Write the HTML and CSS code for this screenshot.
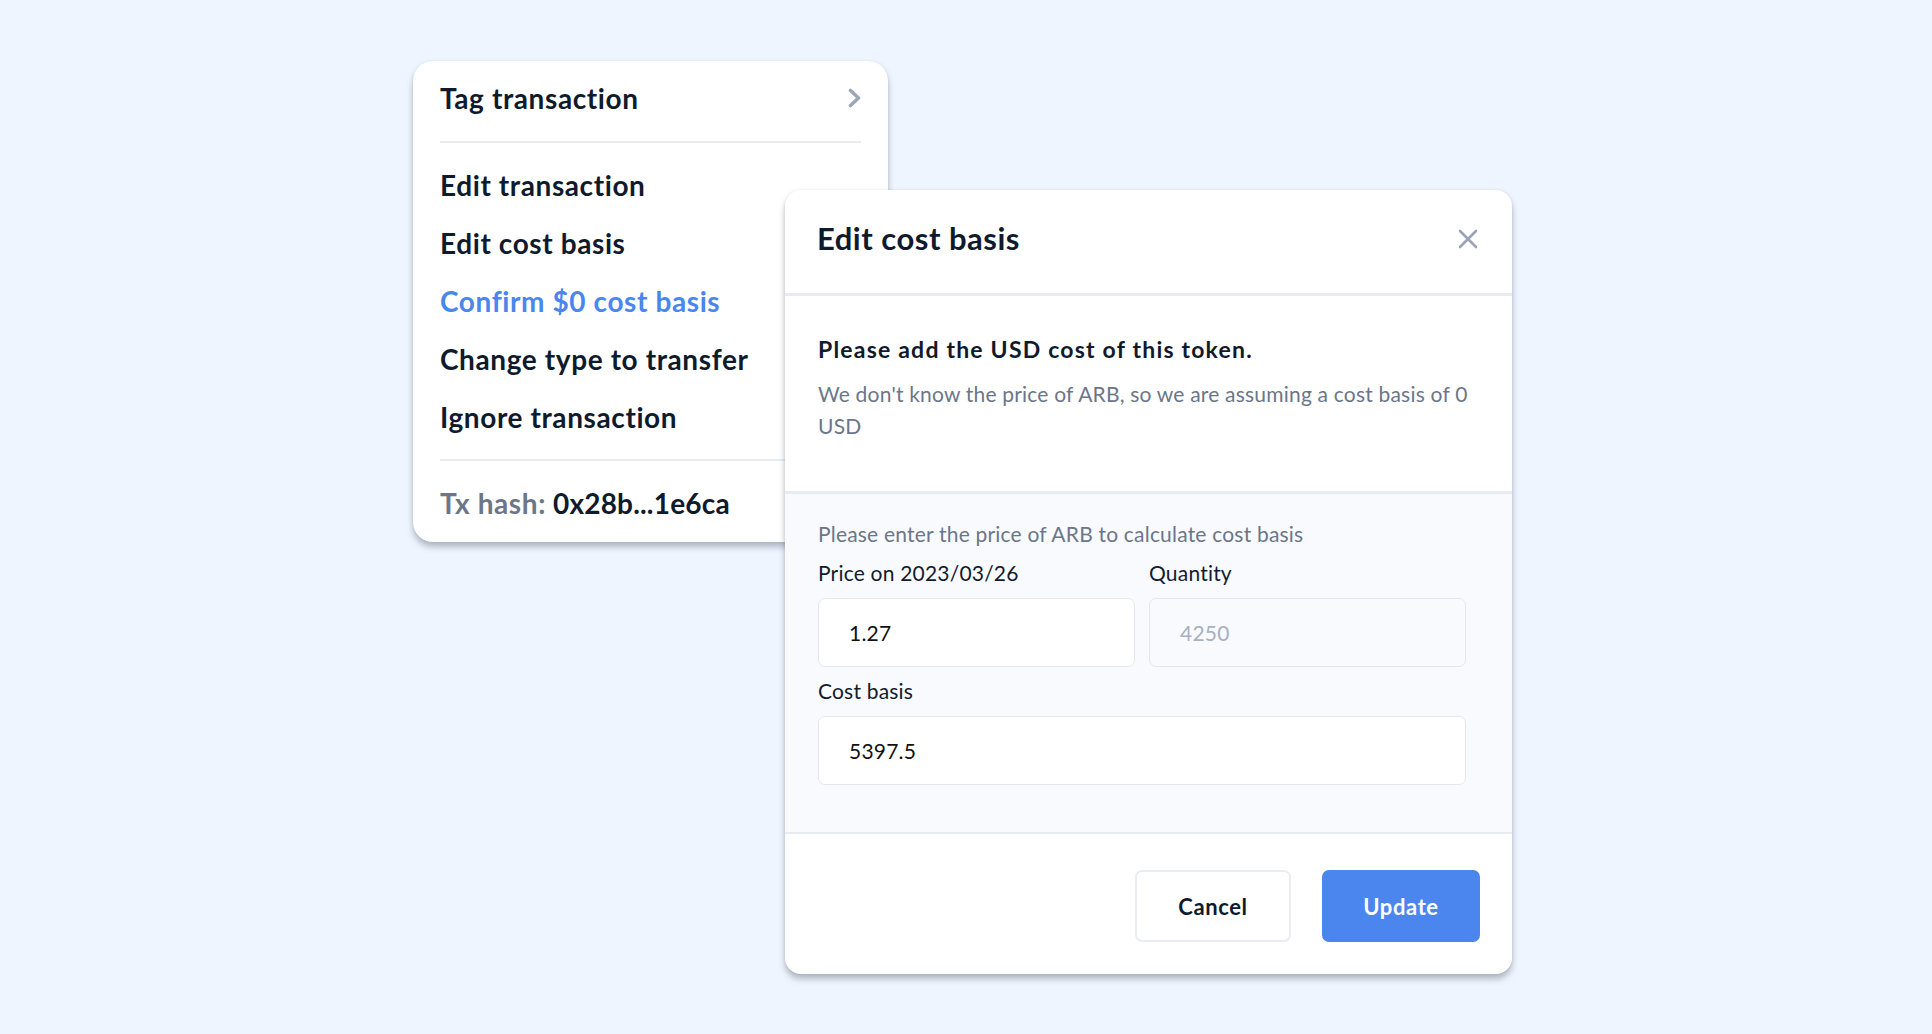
FILE: index.html
```html
<!DOCTYPE html>
<html lang="en">
<head>
<meta charset="utf-8">
<title>Edit cost basis</title>
<link rel="stylesheet" href="styles.css">
</head>
<body>
<div class="stage">
  <div class="menu">
    <div class="menu-head">
      <span class="menu-title">Tag transaction</span>
      <svg class="chev" width="16" height="20" viewBox="0 0 16 20"><path d="M3.5 2.5 L11.5 10 L3.5 17.5" fill="none" stroke="#9ca6b6" stroke-width="3.6" stroke-linecap="round" stroke-linejoin="round"/></svg>
    </div>
    <ul class="menu-list">
      <li class="menu-item">Edit transaction</li>
      <li class="menu-item">Edit cost basis</li>
      <li class="menu-item menu-item-blue">Confirm $0 cost basis</li>
      <li class="menu-item">Change type to transfer</li>
      <li class="menu-item">Ignore transaction</li>
    </ul>
    <div class="menu-foot"><span class="hash-label">Tx hash:</span><span class="hash-val">0x28b...1e6ca</span></div>
  </div>

  <div class="modal">
    <div class="modal-head">
      <h2 class="modal-title">Edit cost basis</h2>
      <svg class="close" width="20" height="20" viewBox="0 0 20 20"><path d="M2 2 L18 18 M18 2 L2 18" fill="none" stroke="#9aa4b6" stroke-width="2.6" stroke-linecap="round"/></svg>
    </div>
    <div class="modal-info">
      <h3 class="info-title">Please add the USD cost of this token.</h3>
      <p class="info-text">We don't know the price of ARB, so we are assuming a cost basis of 0 USD</p>
    </div>
    <div class="modal-form">
      <p class="form-hint">Please enter the price of ARB to calculate cost basis</p>
      <div class="row">
        <div class="field">
          <label class="label">Price on 2023/03/26</label>
          <div class="input">1.27</div>
        </div>
        <div class="field">
          <label class="label">Quantity</label>
          <div class="input input-disabled">4250</div>
        </div>
      </div>
      <div class="field">
        <label class="label">Cost basis</label>
        <div class="input">5397.5</div>
      </div>
    </div>
    <div class="modal-foot">
      <button class="btn btn-cancel">Cancel</button>
      <button class="btn btn-update">Update</button>
    </div>
  </div>
</div>
</body>
</html>
```

FILE: styles.css
```css
* { box-sizing: border-box; }
html, body { margin: 0; padding: 0; }
body {
  background: #eff5fe;
  font-family: "Lato", "Liberation Sans", sans-serif;
  color: #0f1a2d;
}
.stage {
  position: relative;
  width: 1932px;
  height: 1034px;
  overflow: hidden;
}

/* context menu */
.menu {
  position: absolute;
  left: 413px;
  top: 61px;
  width: 475px;
  height: 481px;
  background: #fff;
  border-radius: 20px;
  box-shadow: 0 5px 6px rgba(60, 70, 85, 0.35), 0 0 3px rgba(60, 70, 85, 0.08);
  padding: 0 27px;
}
.menu-head {
  height: 82px;
  padding-bottom: 6px;
  display: flex;
  align-items: center;
  justify-content: space-between;
  border-bottom: 2px solid #e8ecf1;
}
.menu-title, .menu-item {
  font-size: 28px;
  font-weight: 700;
  letter-spacing: 0.6px;
  line-height: 58px;
  white-space: nowrap;
}
.menu-title { line-height: 40px; }
.chev { margin-right: -2px; }
.menu-list {
  list-style: none;
  margin: 0;
  padding: 13px 0 13px;
  border-bottom: 2px solid #e8ecf1;
}
.menu-item-blue { color: #4a86ee; }
.menu-foot {
  height: 79px;
  padding-top: 4px;
  display: flex;
  align-items: center;
  font-size: 28px;
  font-weight: 700;
  white-space: nowrap;
}
.hash-label { color: #6b7689; letter-spacing: 0.6px; margin-right: 7px; }
.hash-val { letter-spacing: 0.2px; }

/* modal */
.modal {
  position: absolute;
  left: 785px;
  top: 190px;
  width: 727px;
  height: 784px;
  background: #fff;
  border-radius: 16px;
  box-shadow: 0 5px 6px rgba(60, 70, 85, 0.35), 0 0 3px rgba(60, 70, 85, 0.1);
  display: flex;
  flex-direction: column;
  overflow: hidden;
}
.modal-head {
  height: 103px;
  padding: 0 34px 8px 32px;
  display: flex;
  align-items: center;
  justify-content: space-between;
}
.modal-title {
  margin: 0;
  font-size: 31px;
  font-weight: 700;
  letter-spacing: 0.5px;
  line-height: 40px;
}
.close { margin-top: 2px; }
.modal-info {
  border-top: 3px solid #e8ecf1;
  padding: 38px 33px 50px;
  height: 198px;
}
.info-title {
  margin: 0;
  font-size: 23px;
  font-weight: 700;
  letter-spacing: 1.2px;
  line-height: 30px;
}
.info-text {
  margin: 14px 0 0;
  font-size: 21px;
  line-height: 31.5px;
  color: #6b7689;
  letter-spacing: 0.2px;
}
.modal-form {
  border-top: 3px solid #e8ecf1;
  background: #f8fafd;
  padding: 26px 46px 0 33px;
  height: 341px;
}
.form-hint {
  margin: 0 0 11px;
  font-size: 21px;
  line-height: 28px;
  color: #6b7689;
  letter-spacing: 0.2px;
}
.row {
  display: flex;
  gap: 14px;
  margin-bottom: 10px;
}
.row .field { flex: 1; }
.label {
  display: block;
  font-size: 21px;
  line-height: 28px;
  color: #121c2e;
  letter-spacing: 0.2px;
  margin-bottom: 11px;
}
.input {
  height: 69px;
  border: 1px solid #e4e8ee;
  border-radius: 7px;
  background: #fff;
  padding: 0 30px;
  display: flex;
  align-items: center;
  font-size: 21px;
  color: #111;
  letter-spacing: 0.2px;
}
.input-disabled {
  background: #f8fafd;
  color: #a7b0c0;
}
.modal-foot {
  border-top: 2px solid #e8ecf1;
  flex: 1;
  display: flex;
  justify-content: flex-end;
  align-items: flex-start;
  gap: 31px;
  padding: 36px 32px 0 0;
}
.btn {
  height: 72px;
  border-radius: 7px;
  font-family: inherit;
  font-size: 22px;
  font-weight: 700;
  letter-spacing: 0.6px;
  cursor: pointer;
}
.btn-cancel {
  width: 156px;
  background: #fff;
  border: 2px solid #e9edf3;
  color: #0f1a2d;
}
.btn-update {
  width: 158px;
  background: #4a86ee;
  border: none;
  color: #fff;
}
```
